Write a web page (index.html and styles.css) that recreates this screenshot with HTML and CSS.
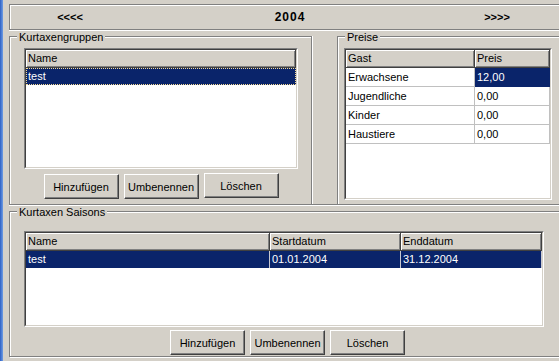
FILE: index.html
```html
<!DOCTYPE html>
<html lang="de">
<head>
<meta charset="utf-8">
<title>Kurtaxen</title>
<link rel="stylesheet" href="styles.css">
</head>
<body>
<div class="app">
  <div class="strip"></div>
  <div class="main">
    <div class="yearbar">
      <span class="nav">&lt;&lt;&lt;&lt;</span>
      <span class="year">2004</span>
      <span class="nav">&gt;&gt;&gt;&gt;</span>
    </div>
    <div class="toprow">
      <section class="group group-gruppen">
        <span class="legend">Kurtaxengruppen</span>
        <div class="list list-gruppen">
          <div class="list-in">
            <div class="hdr">
              <div class="hc c-full">Name</div>
            </div>
            <div class="row sel focus">
              <div class="cell c-full">test</div>
            </div>
          </div>
        </div>
        <div class="btns btns-gruppen">
          <button class="btn">Hinzufügen</button>
          <button class="btn">Umbenennen</button>
          <button class="btn btn-up">Löschen</button>
        </div>
      </section>
      <section class="group group-preise">
        <span class="legend">Preise</span>
        <div class="list list-preise">
          <div class="list-in">
            <div class="hdr">
              <div class="hc c-gast">Gast</div>
              <div class="hc c-preis">Preis</div>
            </div>
            <div class="grow">
              <div class="gc c-gast">Erwachsene</div>
              <div class="gc c-preis sel">12,00</div>
            </div>
            <div class="grow">
              <div class="gc c-gast">Jugendliche</div>
              <div class="gc c-preis">0,00</div>
            </div>
            <div class="grow">
              <div class="gc c-gast">Kinder</div>
              <div class="gc c-preis">0,00</div>
            </div>
            <div class="grow">
              <div class="gc c-gast">Haustiere</div>
              <div class="gc c-preis">0,00</div>
            </div>
          </div>
        </div>
      </section>
    </div>
    <section class="group group-saisons">
      <span class="legend">Kurtaxen Saisons</span>
      <div class="list list-saisons">
        <div class="list-in">
          <div class="hdr">
            <div class="hc c-name">Name</div>
            <div class="hc c-start">Startdatum</div>
            <div class="hc c-end">Enddatum</div>
          </div>
          <div class="row sel">
            <div class="cell c-name">test</div>
            <div class="cell c-start">01.01.2004</div>
            <div class="cell c-end">31.12.2004</div>
          </div>
        </div>
      </div>
      <div class="btns btns-saisons">
        <button class="btn">Hinzufügen</button>
        <button class="btn">Umbenennen</button>
        <button class="btn">Löschen</button>
      </div>
    </section>
  </div>
</div>
</body>
</html>
```
FILE: styles.css
```css
html, body {
  margin: 0;
  padding: 0;
}
body {
  background: #d4d0c8;
  font: 11px "Liberation Sans", Arial, sans-serif;
  color: #000;
  width: 559px;
  height: 361px;
  overflow: hidden;
}
.app {
  display: flex;
  height: 361px;
}
.strip {
  width: 3px;
  flex: none;
  background: linear-gradient(to right, #2c5fc4, #6f9de4);
}
.main {
  flex: 1;
  min-width: 0;
  padding-left: 6px;
  display: flex;
  flex-direction: column;
  overflow: hidden;
}

/* year bar */
.yearbar {
  margin-top: 4px;
  height: 26px;
  box-sizing: border-box;
  border: 1px solid #808080;
  border-right: none;
  box-shadow: inset 1px 1px 0 #fff, 0 1px 0 #fff;
  display: grid;
  grid-template-columns: 120px 320px 94px;
  align-items: center;
  flex: none;
}
.nav, .year {
  text-align: center;
  font-weight: bold;
  line-height: 14px;
}
.year {
  font-size: 12px;
  letter-spacing: 1px;
}

/* top row */
.toprow {
  display: flex;
  height: 175px;
  box-sizing: border-box;
  padding-top: 6px;
  border-bottom: 1px solid #808080;
  box-shadow: 0 1px 0 #fff;
  flex: none;
}

/* group boxes */
.group {
  position: relative;
  box-sizing: border-box;
  border: 1px solid #808080;
  box-shadow: inset 1px 1px 0 #fff, 1px 1px 0 #fff;
}
.legend {
  position: absolute;
  top: -6px;
  left: 7px;
  padding: 0 2px;
  background: #d4d0c8;
  line-height: 13px;
  white-space: nowrap;
}
.group-gruppen {
  width: 303px;
  border-bottom: none;
  box-shadow: inset 1px 1px 0 #fff, 1px 0 0 #fff;
  padding: 11px 0 0 14px;
}
.group-preise {
  flex: 1;
  margin-left: 25px;
  border-bottom: none;
  border-right: none;
  box-shadow: inset 1px 1px 0 #fff;
  padding: 11px 0 0 6px;
}
.group-saisons {
  margin-top: 6px;
  height: 146px;
  border-right: none;
  padding: 19px 0 0 14px;
  flex: none;
}

/* sunken lists */
.list {
  box-sizing: border-box;
  border: 1px solid;
  border-color: #808080 #fff #fff #808080;
  background: #fff;
}
.list-in {
  box-sizing: border-box;
  height: 100%;
  border: 1px solid;
  border-color: #404040 #d4d0c8 #d4d0c8 #404040;
  background: #fff;
  overflow: hidden;
}
.list-gruppen {
  width: 274px;
  height: 121px;
}
.list-preise {
  width: 208px;
  height: 152px;
}
.list-saisons {
  width: 520px;
  height: 96px;
}

.hdr {
  display: flex;
  height: 18px;
}
.hc {
  box-sizing: border-box;
  height: 18px;
  line-height: 16px;
  padding-left: 2px;
  background: #d4d0c8;
  border-right: 1px solid #404040;
  border-bottom: 1px solid #404040;
  box-shadow: inset 1px 1px 0 #fff, inset -1px -1px 0 #808080;
  white-space: nowrap;
  overflow: hidden;
  flex: none;
}
.c-full { width: 100%; }
.c-gast { width: 129px; }
.c-preis { width: 75px; }
.c-name { width: 244px; }
.c-start { width: 131px; }
.c-end { width: 141px; }

.row {
  display: flex;
  height: 17px;
  line-height: 17px;
}
.row .cell {
  box-sizing: border-box;
  padding-left: 2px;
  white-space: nowrap;
  flex: none;
}
.list-saisons .row .cell {
  border-right: 1px solid #c8c8d0;
}
.sel {
  background: #0a246a;
  color: #fff;
}
.focus {
  outline: 1px dotted #f5db95;
  outline-offset: -1px;
}

/* grid rows */
.grow {
  display: flex;
  height: 19px;
}
.gc {
  box-sizing: border-box;
  flex: none;
  padding-left: 2px;
  line-height: 18px;
  border-right: 1px solid #c0c0c0;
  border-bottom: 1px solid #c0c0c0;
  white-space: nowrap;
}
.gc.sel {
  border-color: #0a246a;
}

/* buttons */
.btns {
  display: flex;
  align-items: flex-start;
  gap: 5px;
}
.btns-gruppen {
  width: 274px;
  justify-content: center;
  margin-top: 5px;
}
.btns-saisons {
  margin-top: 3px;
  margin-left: 146px;
}
.btn {
  box-sizing: border-box;
  width: 75px;
  height: 25px;
  padding: 0;
  margin: 0;
  font: 11px "Liberation Sans", Arial, sans-serif;
  color: #000;
  background: #d4d0c8;
  border: 1px solid;
  border-color: #fff #404040 #404040 #fff;
  box-shadow: inset -1px -1px 0 #808080;
  border-radius: 0;
}
.btn-up {
  margin-top: -1px;
}
```
